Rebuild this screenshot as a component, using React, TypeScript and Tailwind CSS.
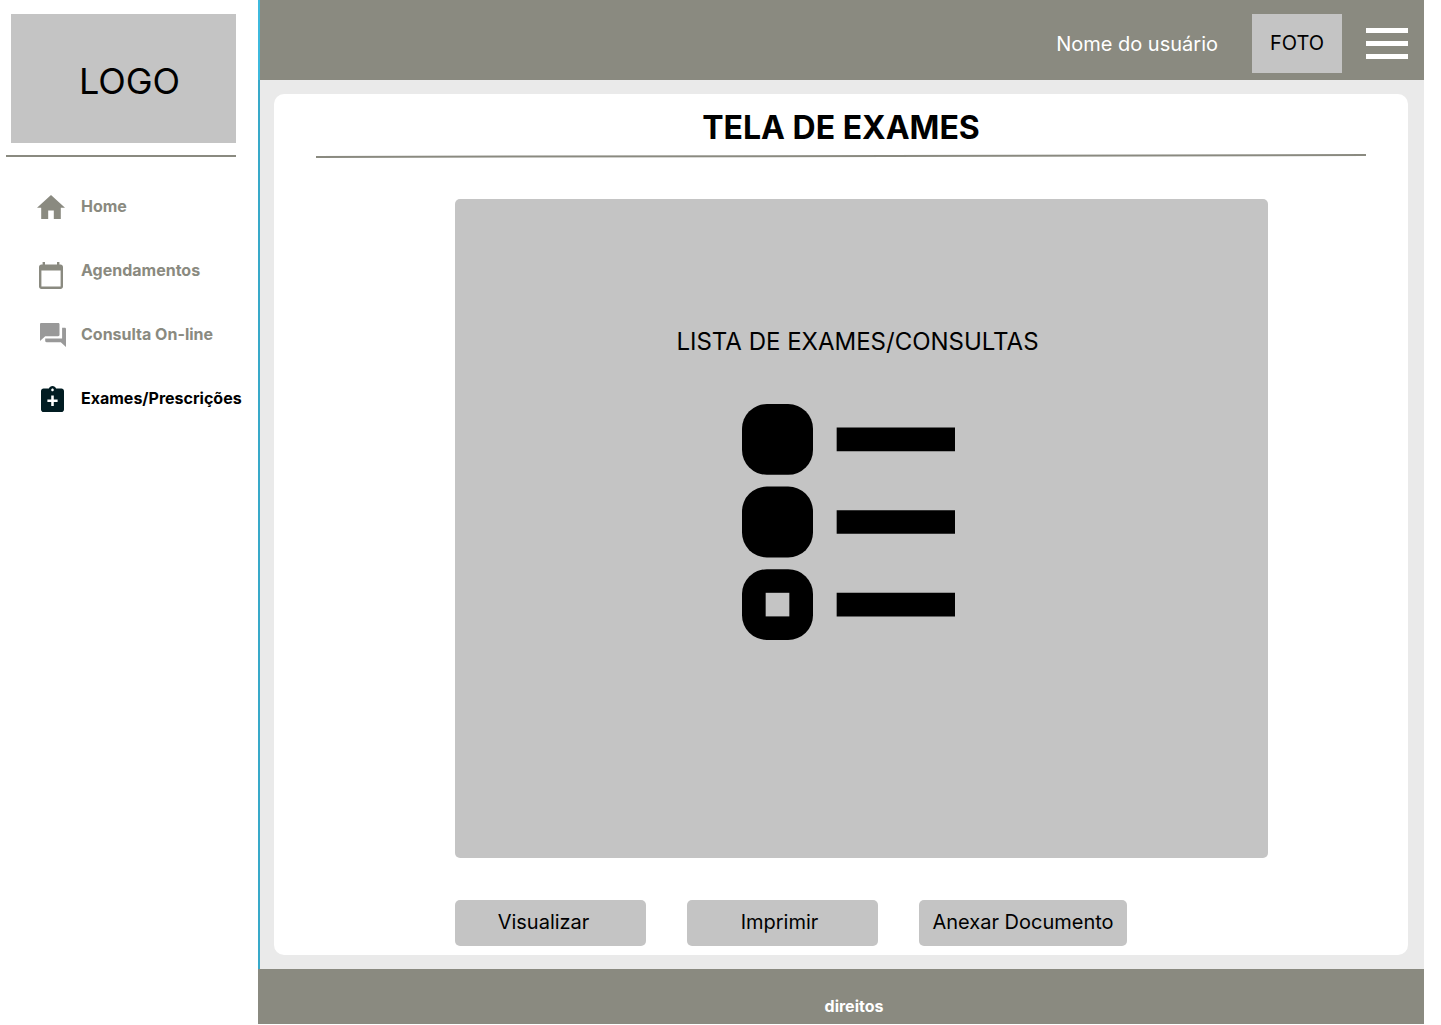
import type { ReactNode } from "react";

type NavItem = { label: string; icon: ReactNode; active?: boolean };

function HomeIcon() {
  return (
    <svg viewBox="2 3 20 17" preserveAspectRatio="none" className="mt-0.5 h-6 w-7 fill-[#8a8a80]" aria-hidden="true">
      <path d="M10 20v-6h4v6h5v-8h3L12 3 2 12h3v8z" />
    </svg>
  );
}

function CalendarIcon() {
  return (
    <svg viewBox="2 1 20 22" preserveAspectRatio="none" className="mt-[10px] h-[27px] w-6 fill-[#8a8a80]" aria-hidden="true">
      <path d="M20 3h-1V1h-2v2H7V1H5v2H4c-1.1 0-2 .9-2 2v16c0 1.1.9 2 2 2h16c1.1 0 2-.9 2-2V5c0-1.1-.9-2-2-2zm0 18H4V8h16v13z" />
    </svg>
  );
}

function ChatIcon() {
  return (
    <svg viewBox="2 2 20 20" preserveAspectRatio="none" className="mt-0.5 ml-[3px] h-6 w-[26px] shrink-0 fill-[#999999]" aria-hidden="true">
      <path d="M21 6h-2v9H6v2c0 .55.45 1 1 1h11l4 4V7c0-.55-.45-1-1-1zm-4 6V3c0-.55-.45-1-1-1H3c-.55 0-1 .45-1 1v14l4-4h10c.55 0 1-.45 1-1z" />
    </svg>
  );
}

function ExamIcon() {
  return (
    <svg viewBox="3 1 18 20" preserveAspectRatio="none" className="mt-0.5 ml-[3px] h-[26px] w-[23px] fill-[#011c22]" aria-hidden="true">
      <path
        fillRule="evenodd"
        d="M19 3h-4.18C14.4 1.84 13.3 1 12 1s-2.4.84-2.82 2H5c-1.1 0-2 .9-2 2v14c0 1.1.9 2 2 2h14c1.1 0 2-.9 2-2V5c0-1.1-.9-2-2-2zm-7 0c.55 0 1 .45 1 1s-.45 1-1 1-1-.45-1-1 .45-1 1-1zM16 13.4h-3v3h-2v-3H8v-2h3v-3h2v3h3z"
      />
    </svg>
  );
}

function ListIcon() {
  return (
    <svg viewBox="0 0 18 20" preserveAspectRatio="none" className="h-[236px] w-[213px]" aria-hidden="true">
      <rect width="6" height="6" rx="2.1" />
      <rect y="7" width="6" height="6" rx="2.1" />
      <rect y="14" width="6" height="6" rx="2.1" />
      <rect x="2" y="16" width="2" height="2" fill="#c4c4c4" />
      <path d="M8 2h10v2H8zM8 9h10v2H8zM8 16h10v2H8z" />
    </svg>
  );
}

const navItems: NavItem[] = [
  { label: "Home", icon: <HomeIcon /> },
  { label: "Agendamentos", icon: <CalendarIcon /> },
  { label: "Consulta On-line", icon: <ChatIcon /> },
  { label: "Exames/Prescrições", icon: <ExamIcon />, active: true },
];

function Sidebar() {
  return (
    <aside className="w-[258px] shrink-0 pt-[14px]">
      <div className="mr-[22px] ml-[11px] flex h-[129px] items-center justify-center bg-[#c4c4c4] pt-1 pl-3 text-4xl">
        LOGO
      </div>
      <hr className="mt-3 mr-[22px] ml-[6px] border-t-2 border-[#8a8a80]" />
      <nav className="mt-[17px]">
        <ul>
          {navItems.map((item) => (
            <li key={item.label} className="h-16">
              <a
                href="#"
                aria-current={item.active ? "page" : undefined}
                className={`flex h-16 items-center text-base font-bold whitespace-nowrap ${
                  item.active ? "text-black" : "text-[#8a8a80]"
                }`}
              >
                <span className="flex w-[81px] shrink-0 pl-[37px]">
                  <span className="flex w-7 justify-center">{item.icon}</span>
                </span>
                {item.label}
              </a>
            </li>
          ))}
        </ul>
      </nav>
    </aside>
  );
}

function Header() {
  return (
    <header className="flex h-20 items-center justify-end border-l-2 border-[#3eb9dd] bg-[#8a8a80] pt-[7px] pr-4 text-xl">
      <span className="text-white">Nome do usuário</span>
      <div className="ml-[34px] flex h-[59px] w-[90px] items-center justify-center bg-[#c4c4c4] pb-0.5">FOTO</div>
      <button type="button" aria-label="Menu" className="ml-6 flex w-[42px] flex-col gap-2">
        <span className="h-[5px] bg-white" />
        <span className="h-[5px] bg-white" />
        <span className="h-[5px] bg-white" />
      </button>
    </header>
  );
}

export default function App() {
  return (
    <div className="flex min-h-screen bg-white pr-[17px] pb-px font-['Inter',sans-serif] text-black">
      <Sidebar />
      <div className="flex min-w-0 flex-1 flex-col">
        <Header />
        <main className="flex flex-1 flex-col border-l-2 border-[#38a9c9] bg-[#eaeaea] py-[14px] pr-4 pl-[14px]">
          <section className="flex flex-1 flex-col rounded-[10px] bg-white pt-[14px] pb-[9px]">
            <h1 className="text-center text-[32px] leading-10 font-bold">TELA DE EXAMES</h1>
            <hr className="mx-[42px] mt-[7px] -rotate-[0.1deg] border-t-2 border-[#8a8a80]" />
            <div className="mt-[42px] mr-[140px] ml-[181px] flex flex-1 flex-col items-center rounded-[5px] bg-[#c4c4c4] pt-[127px]">
              <h2 className="pr-2 text-2xl leading-8">LISTA DE EXAMES/CONSULTAS</h2>
              <div className="mt-[46px] pr-[26px]">
                <ListIcon />
              </div>
            </div>
            <div className="mt-[42px] ml-[181px] flex gap-[41px] text-xl">
              <button type="button" className="h-[46px] w-[191px] rounded-[5px] bg-[#c4c4c4] pr-[14px] pb-0.5">
                Visualizar
              </button>
              <button type="button" className="h-[46px] w-[191px] rounded-[5px] bg-[#c4c4c4] pr-[6px] pb-0.5">
                Imprimir
              </button>
              <button type="button" className="h-[46px] w-[208px] rounded-[5px] bg-[#c4c4c4] pb-0.5">
                Anexar Documento
              </button>
            </div>
          </section>
        </main>
        <footer className="flex h-[55px] items-center justify-center bg-[#8a8a80] pt-[18px] pl-[26px] text-base font-bold text-white">
          direitos
        </footer>
      </div>
    </div>
  );
}
